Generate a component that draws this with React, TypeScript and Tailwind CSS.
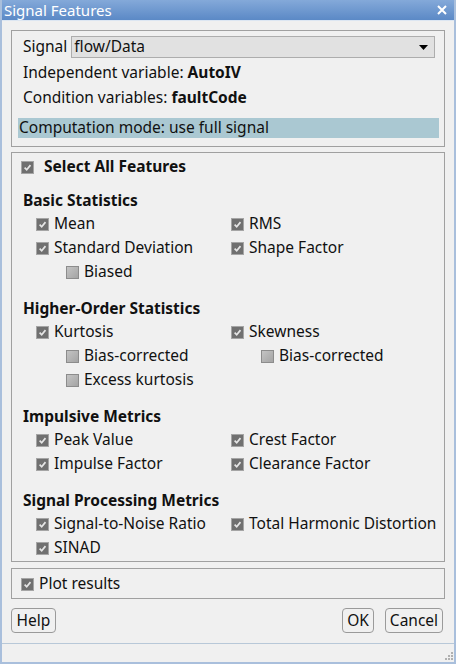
import React from 'react';

// checkbox drawn like the classic greyed Windows box
const Box = ({ on }: { on: boolean }) =>
  on ? (
    <span className="flex h-[13px] w-[13px] shrink-0 items-center justify-center border border-[#a5a5a5] bg-[#707070]">
      <svg viewBox="0 0 10 10" className="h-[9px] w-[9px]">
        <path d="M1.8 5.2 L4.1 7.5 L8.3 2.4" fill="none" stroke="#e6e6e6" strokeWidth="1.9" />
      </svg>
    </span>
  ) : (
    <span className="h-[13px] w-[13px] shrink-0 border border-[#8c8c8c] bg-gradient-to-br from-[#c4c4c4] to-[#a4a4a4]" />
  );

const Item = ({ label, on = true, sub = false }: { label: string; on?: boolean; sub?: boolean }) => (
  <div className={`flex h-6 items-center gap-[5px] ${sub ? 'pl-[30px]' : ''}`}>
    <Box on={on} />
    <span>{label}</span>
  </div>
);

const Head = ({ text, first = false }: { text: string; first?: boolean }) => (
  <div className={`flex h-[22px] items-center font-bold ${first ? 'mt-[11px]' : 'mt-[14px]'}`}>{text}</div>
);

export default function App() {
  return (
    <div className="flex h-[664px] w-[456px] flex-col overflow-hidden border-x-2 border-b-2 border-[#a9bfdc] bg-[#f0f0f0] font-['Noto_Sans',sans-serif] text-[15.5px] leading-none text-[#111]">
      {/* title bar */}
      <div className="-mx-[2px] flex h-[20px] shrink-0 items-center justify-between bg-gradient-to-b from-[#84a9d9] to-[#5b89c6] pl-[4px] pr-[9px] text-white">
        <span className="text-[15px]">Signal Features</span>
        <svg viewBox="0 0 10 10" className="h-[10px] w-[10px]">
          <path d="M1 1 L9 9 M9 1 L1 9" stroke="white" strokeWidth="2" />
        </svg>
      </div>
      <div className="h-px shrink-0 bg-[#dce6f2]" />

      <div className="flex flex-1 flex-col px-[9px] pt-[9px]">
        {/* signal panel */}
        <div className="flex flex-col border border-[#a0a0a0] pb-[8px] pl-[11px] pr-[9px] pt-[5px]">
          <div className="flex h-[22px] items-center gap-[4px]">
            <span>Signal</span>
            <div className="flex h-[22px] flex-1 items-center justify-between border border-[#adadad] bg-[#e1e1e1] pl-[2px] pr-[6px]">
              <span>flow/Data</span>
              <svg viewBox="0 0 9 5" className="h-[5px] w-[9px]">
                <path d="M0 0 H9 L4.5 5 Z" fill="#000" />
              </svg>
            </div>
          </div>
          <div className="mt-[2px] flex h-[25px] items-center">
            Independent variable:&nbsp;<b>AutoIV</b>
          </div>
          <div className="flex h-[25px] items-center">
            Condition variables:&nbsp;<b>faultCode</b>
          </div>
          <div className="-ml-[5px] -mr-[4px] mt-[8px] flex h-[20px] items-center bg-[#aac8d2] pl-[1px]">
            Computation mode: use full signal
          </div>
        </div>

        {/* features panel */}
        <div className="mt-[5px] flex flex-col border border-[#a0a0a0] pb-px pl-[9px] pt-[2px]">
          <div className="flex h-6 items-center gap-[10px] font-bold">
            <Box on />
            <span>Select All Features</span>
          </div>

          <div className="pl-[2px]">
            <Head text="Basic Statistics" first />
            <div className="grid grid-cols-[195px_1fr] pl-[13px]">
              <div>
                <Item label="Mean" />
                <Item label="Standard Deviation" />
                <Item label="Biased" on={false} sub />
              </div>
              <div>
                <Item label="RMS" />
                <Item label="Shape Factor" />
              </div>
            </div>

            <Head text="Higher-Order Statistics" />
            <div className="grid grid-cols-[195px_1fr] pl-[13px]">
              <div>
                <Item label="Kurtosis" />
                <Item label="Bias-corrected" on={false} sub />
                <Item label="Excess kurtosis" on={false} sub />
              </div>
              <div>
                <Item label="Skewness" />
                <Item label="Bias-corrected" on={false} sub />
              </div>
            </div>

            <Head text="Impulsive Metrics" />
            <div className="grid grid-cols-[195px_1fr] pl-[13px]">
              <div>
                <Item label="Peak Value" />
                <Item label="Impulse Factor" />
              </div>
              <div>
                <Item label="Crest Factor" />
                <Item label="Clearance Factor" />
              </div>
            </div>

            <Head text="Signal Processing Metrics" />
            <div className="grid grid-cols-[195px_1fr] pl-[13px]">
              <div>
                <Item label="Signal-to-Noise Ratio" />
                <Item label="SINAD" />
              </div>
              <div>
                <Item label="Total Harmonic Distortion" />
              </div>
            </div>
          </div>
        </div>

        {/* plot panel */}
        <div className="mt-[6px] flex h-[31px] items-center gap-[5px] border border-[#a0a0a0] pl-[9px] pt-px">
          <Box on />
          <span>Plot results</span>
        </div>

        {/* buttons */}
        <div className="mt-[9px] flex h-[25px] items-center">
          <button className="h-[25px] w-[45px] rounded-[4px] border border-[#9a9a9a]">Help</button>
          <div className="flex-1" />
          <button className="h-[25px] w-[32px] rounded-[4px] border border-[#9a9a9a]">OK</button>
          <button className="ml-[11px] h-[25px] w-[58px] rounded-[4px] border border-[#9a9a9a]">Cancel</button>
          <div className="w-[2px]" />
        </div>
      </div>

      {/* status strip */}
      <div className="flex h-[19px] shrink-0 items-end justify-end border-t border-[#b8c8d8] pb-[1px] pr-[1px]">
        <svg viewBox="0 0 10 10" className="h-[10px] w-[10px]">
          {[[8, 0], [5, 3], [8, 3], [2, 6], [5, 6], [8, 6]].map(([x, y]) => (
            <rect key={`${x}-${y}`} x={x} y={y + 1} width="2" height="2" fill="#b0b0b0" />
          ))}
        </svg>
      </div>
    </div>
  );
}
